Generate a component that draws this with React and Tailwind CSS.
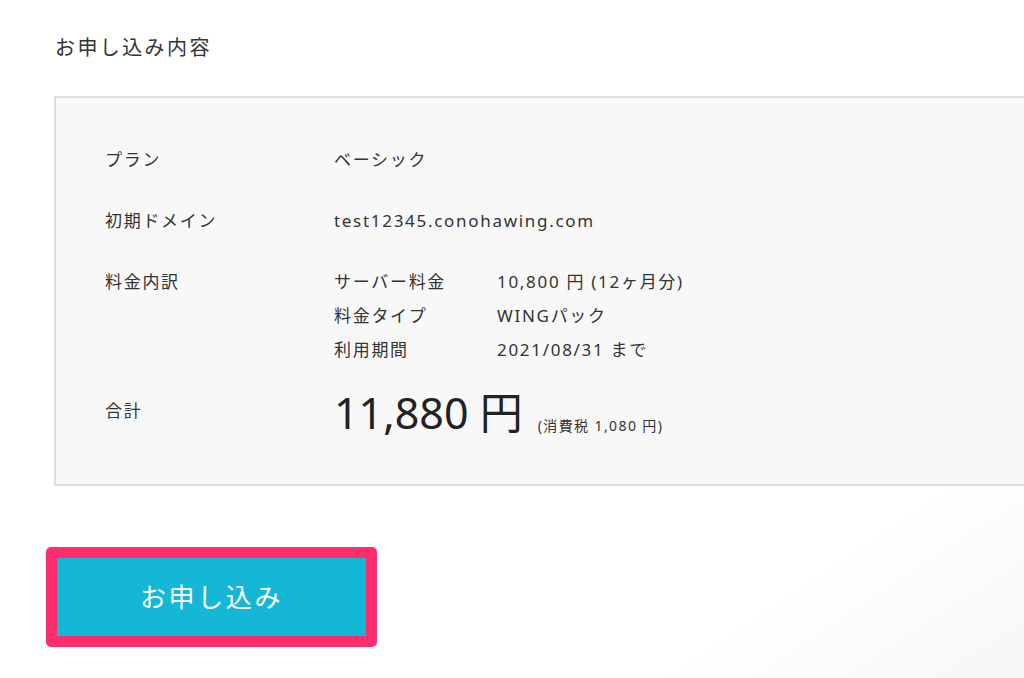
export default function App() {
  const font = { fontFamily: '"Noto Sans", "Noto Sans CJK JP", sans-serif' };
  return (
    <div
      className="w-[1024px] h-[678px] overflow-hidden text-[#333] bg-[linear-gradient(to_bottom_right,#ffffff_82%,#f6f6f6)]"
      style={font}
    >
      <div className="pt-[34px] pl-[55px]">
        <h2 className="text-[20px] leading-[28px] tracking-[0.12em] font-normal">お申し込み内容</h2>
      </div>
      <div className="mt-[34px] ml-[54px] h-[390px] border-2 border-r-0 border-[#dedede] bg-[#f8f8f8] pl-[49px] pt-[49px] text-[17px] tracking-[0.1em]">
        <div className="flex items-center h-[26px]">
          <div className="w-[229px]">プラン</div>
          <div>ベーシック</div>
        </div>
        <div className="flex items-center h-[26px] mt-[35px]">
          <div className="w-[229px]">初期ドメイン</div>
          <div>test12345.conohawing.com</div>
        </div>
        <div className="flex mt-[35px]">
          <div className="w-[229px] leading-[26px]">料金内訳</div>
          <div className="flex flex-col gap-[8px] leading-[26px]">
            <div className="flex"><div className="w-[163px]">サーバー料金</div><div>10,800 円 (12ヶ月分)</div></div>
            <div className="flex"><div className="w-[163px]">料金タイプ</div><div>WINGパック</div></div>
            <div className="flex"><div className="w-[163px]">利用期間</div><div>2021/08/31 まで</div></div>
          </div>
        </div>
        <div className="flex mt-[33px]">
          <div className="w-[229px] leading-[26px] pt-[2px]">合計</div>
          <div className="flex items-end -mt-[12px] tracking-normal">
            <span className="text-[43px] leading-[58px] text-[#222]">11,880 円</span>
            <span className="text-[14px] tracking-[0.1em] ml-[15px] mb-[6px]">(消費税 1,080 円)</span>
          </div>
        </div>
      </div>
      <div className="mt-[61px] ml-[46px]">
        <div className="w-[331px] h-[100px] rounded-[5px] bg-[#ff2d6b] p-[11px]">
          <div className="w-full h-full bg-[#14b8d6] flex items-center justify-center text-white text-[26px] tracking-[0.1em]">
            お申し込み
          </div>
        </div>
      </div>
    </div>
  );
}
